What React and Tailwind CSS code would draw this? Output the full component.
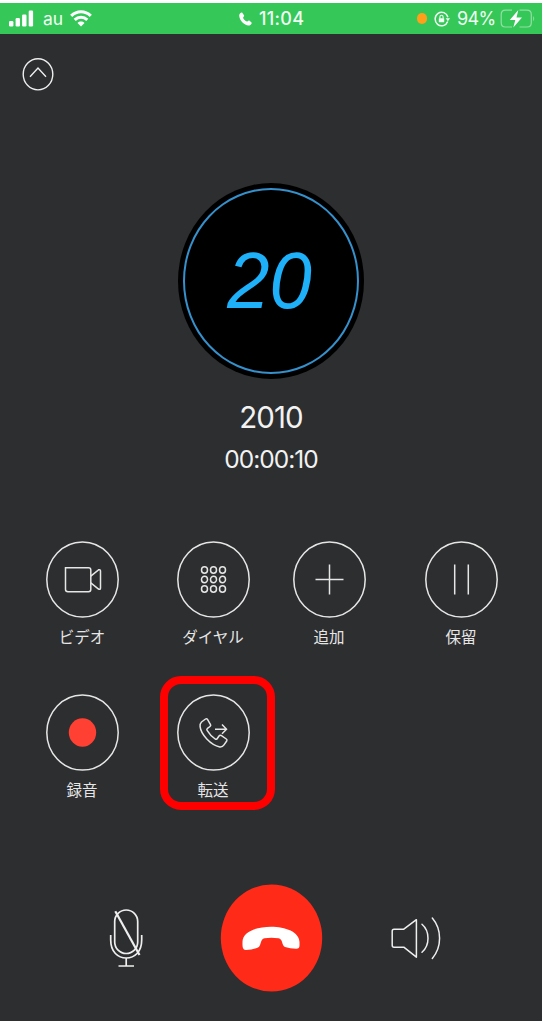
export default function App() {
    return (
        <div className="flex h-[1024px] w-[544px] flex-col bg-white pt-[3px] pr-[2px] pb-[3px]">
            <div className="flex flex-1 flex-col overflow-hidden bg-[#2d2e30] font-['Inter','Noto_Sans_CJK_JP',sans-serif] text-[#f2f2f2]">
                <StatusBar />
                <div className="pt-[23px] pl-[22px]">
                    <ChevronButton />
                </div>
                <Caller />
                <Controls />
                <BottomBar />
            </div>
        </div>
    )
}

function StatusBar() {
    return (
        <div className="flex h-[31px] shrink-0 items-center bg-[#36c759] text-[#f0fff3]">
            <div className="flex w-[239px] items-center pl-[9px]">
                <svg width="25" height="17" viewBox="0 0 25 17" fill="#fff">
                    <rect x="0" y="11" width="4.4" height="5.5" rx="1.2" />
                    <rect x="6.6" y="8" width="4.4" height="8.5" rx="1.2" />
                    <rect x="13.1" y="4.5" width="4.4" height="12" rx="1.2" />
                    <rect x="19.7" y="0.5" width="4.4" height="16" rx="1.2" />
                </svg>
                <span className="ml-[9px] w-[27px] text-[17.5px] leading-none">au</span>
                <svg width="22" height="17" viewBox="0 0 22 17" fill="none" stroke="#fff" strokeWidth="3">
                    <path d="M1.2 5.9 C6.8 .3 15.2 .3 20.8 5.9" />
                    <path d="M4.7 9.9 C8.3 6.4 13.7 6.4 17.3 9.9" />
                    <path d="M11 16.5 L7.5 12.9 C9.5 11 12.5 11 14.5 12.9 Z" fill="#fff" stroke="none" />
                </svg>
            </div>
            <svg width="13" height="14" viewBox="0 0 13 14" fill="#fff">
                <path d="M.4 2.5 C1 1 2.4 0 3.1 .6 L5 3.3 C5.5 4.2 4.2 5 4.1 5.7 C4.4 7.2 6.4 9.2 7.9 9.6 C8.8 9.5 9.4 8.1 10.3 8.6 L12.5 10.4 C13.2 11.3 11.8 13 10.5 13.4 C5.5 14.3 -.9 7 .4 2.5Z" />
            </svg>
            <span className="ml-[7px] w-[158px] pt-px text-[18px] leading-none font-medium tracking-[0.3px]">11:04</span>
            <span className="h-[11px] w-[10px] rounded-full bg-[#ff9f1a]" />
            <svg className="ml-[7px]" width="16" height="16" viewBox="0 0 16 16" fill="none" stroke="#f0fff3" strokeWidth="1.5">
                <path d="M13.7 10.5 A6.5 6.8 0 1 1 13.9 6.2" />
                <path d="M11.7 7.2 L16 7.2 L13.9 10.3Z" fill="#f0fff3" stroke="none" />
                <rect x="4.8" y="7.2" width="5.4" height="4.1" rx=".6" fill="#f0fff3" stroke="none" />
                <path d="M5.9 7.5 V6 a1.6 1.7 0 0 1 3.2 0 V7.5" strokeWidth="1.1" />
            </svg>
            <span className="ml-[7px] w-[43px] pt-px text-[18px] leading-none tracking-[-0.7px]">94%</span>
            <svg width="36" height="20" viewBox="0 0 36 20" fill="none">
                <path d="M12 1.2 H5.5 Q1.2 1.2 1.2 5.5 V13.7 Q1.2 18 5.5 18 H12 M19.5 1.2 H27 Q31.3 1.2 31.3 5.5 V13.7 Q31.3 18 27 18 H19.5" stroke="#91dfa3" strokeWidth="1.2" />
                <path d="M33.2 7 Q35.2 9.6 33.2 12.2Z" fill="#91dfa3" />
                <path d="M18.3 1 L9.8 11 H15.3 L13.3 18.6 L22 8.4 H16.5Z" fill="#fff" />
            </svg>
        </div>
    )
}

function ChevronButton() {
    return (
        <svg width="32" height="34" viewBox="0 0 32 34" fill="none" stroke="#eee" strokeWidth="1.4">
            <ellipse cx="16" cy="17.3" rx="14.8" ry="15.6" />
            <path d="M8 19.7 L16 11 L24 19.7" />
        </svg>
    )
}

function Caller() {
    return (
        <div className="mt-[92px] flex flex-col items-center">
            <div className="flex h-[196px] w-[186px] items-center justify-center rounded-[50%] bg-black">
                <div className="flex h-[186px] w-[176px] items-center justify-center rounded-[50%] border-2 border-[#3590cb]">
                    <span className="scale-x-95 pr-1 font-['Liberation_Sans',sans-serif] text-[80px] leading-none text-[#1eb1fa] italic">20</span>
                </div>
            </div>
            <p className="mt-[20px] text-[29.5px] leading-9 tracking-[-0.9px]">2010</p>
            <p className="mt-[8px] text-[24.5px] leading-8 tracking-[-1px]">00:00:10</p>
        </div>
    )
}

function Control({ label, children, highlighted }) {
    return (
        <div className="relative flex flex-col items-center">
            <svg width="75" height="79" viewBox="-37.5 -39.5 75 79" fill="none" stroke="#e6e6e6" strokeWidth="1.5">
                <ellipse rx="35.7" ry="37.6" />
                {children}
            </svg>
            <span className="mt-[7px] text-[15.5px] leading-6 whitespace-nowrap text-[#e6e6e6]">{label}</span>
            {highlighted && (
                <div className="absolute -top-[17px] left-[12.5px] h-[134px] w-[115px] rounded-[21px] border-8 border-[#ff0000]" />
            )}
        </div>
    )
}

function Controls() {
    return (
        <div className="mt-[64.5px] grid grid-cols-[131px_131px_101px_163px] gap-y-[43px] pl-[16.5px]">
            <Control label="ビデオ">
                <path d="M-16.5 -11.7 H6 Q8.3 -11.7 8.3 -9.5 V10 Q8.3 12.2 6 12.2 H-14.5 Q-17 12.2 -17 10 V-11.7Z" />
                <path d="M8.3 -3.3 L16 -9.7 Q18 -10.3 18 -8.5 V8.5 Q18 10.5 16 9.5 L8.3 3.3" />
            </Control>
            <Control label="ダイヤル">
                {[-9.5, 0, 9.5].map((y) => [-9, 0, 9].map((x) => (
                    <ellipse key={`${x}${y}`} cx={x} cy={y} rx="3" ry="3.2" />
                )))}
            </Control>
            <Control label="追加">
                <path d="M-14 0 H14 M0 -15 V15" />
            </Control>
            <Control label="保留">
                <path d="M-6.8 -15 V15 M6.8 -15 V15" />
            </Control>
            <Control label="録音">
                <ellipse rx="13.7" ry="14.3" fill="#ff4033" stroke="none" />
            </Control>
            <Control label="転送" highlighted>
                <path d="M-12 -10.5 L-8 -13.5 Q-6.8 -14.3 -6 -13.1 L-3 -8 Q-2.4 -6.8 -3.5 -6 L-6 -4.2 Q-7.2 -3.3 -6.4 -2.1 Q-3.4 3 1.7 6.5 Q3 7.3 3.8 6 L5.5 3.5 Q6.4 2.3 7.6 3 L12.8 6.5 Q14 7.3 13.2 8.5 L10.5 12.4 Q9 14.8 6.3 14.5 C-3 12.5 -12.5 2 -13.4 -5.8 Q-13.8 -8.8 -12 -10.5Z" />
                <path d="M1.5 -3.3 H12.8 M8.5 -8 L13 -3.3 L8.5 1.2" />
            </Control>
        </div>
    )
}

function BottomBar() {
    return (
        <div className="mt-[81.5px] flex h-[108px] shrink-0 items-center">
            <svg className="ml-[108px]" width="36" height="60" viewBox="0 0 36 60" fill="none" stroke="#eee" strokeWidth="1.7">
                <rect x="6.7" y="2" width="23" height="43.5" rx="11.5" />
                <path d="M2.7 27 V32 C2.7 44 10 50 18.2 50 C26.5 50 33.7 44 33.7 32 V27 M18.2 50 V58 M10.5 58 H26" />
                <path d="M7.3 3.2 L31.5 47" strokeWidth="2.2" />
            </svg>
            <svg className="ml-[76px]" width="103" height="108" viewBox="0 0 103 108">
                <ellipse cx="51.5" cy="54" rx="50.7" ry="53.6" fill="#ff2a18" />
                <path d="M22.5 58 C22.5 37.5 79.5 37.5 79.5 58 V61.5 Q79.5 65 76 64.8 Q70 64.5 65 63 C61.5 61.5 63 54.7 58.5 54.2 Q51 53.5 44.5 54.2 C40 54.7 41.5 62 38 63.5 Q33 65.5 26 66 C22 66.2 22.5 61 22.5 58Z" fill="#fff" />
            </svg>
            <svg className="ml-[67px]" width="52" height="46" viewBox="0 -0.7 52 46" fill="none" stroke="#eee" strokeWidth="1.5" strokeLinecap="round" strokeLinejoin="round">
                <path d="M4 13.5 H13.8 L26.4 4 V41.5 L13.8 31.5 H4 Q2.2 31.5 2.2 29.5 V15.5 Q2.2 13.5 4 13.5Z" />
                <path d="M32 8.5 C40 15.5 40 29.5 32 36.5 M42.3 2.3 C52 13.8 52 31.2 42.3 42.7" />
            </svg>
        </div>
    )
}
